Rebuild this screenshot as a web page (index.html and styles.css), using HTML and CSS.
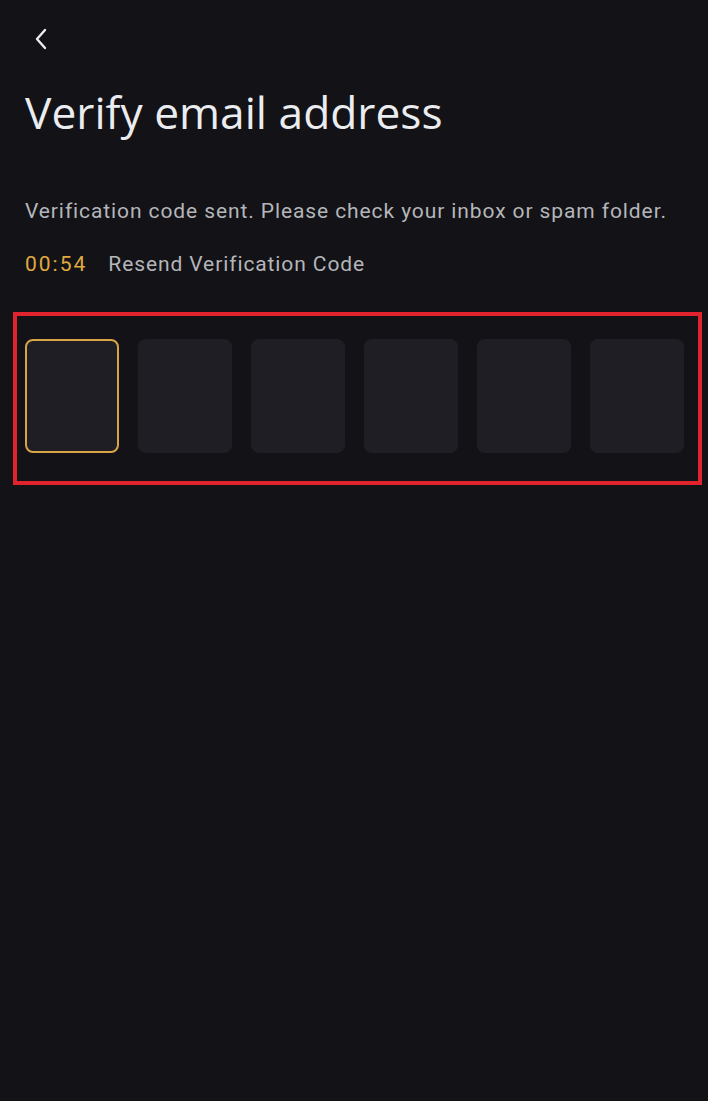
FILE: index.html
```html
<!DOCTYPE html>
<html lang="en">
<head>
    <meta charset="UTF-8">
    <meta name="viewport" content="width=device-width, initial-scale=1.0">
    <title>Verify email address</title>
    <link rel="stylesheet" href="styles.css">
</head>
<body>
    <div class="page">
        <button class="back" aria-label="Back">
            <svg width="14" height="22" viewBox="0 0 14 22">
                <path d="M11 2 L3 11 L11 20" fill="none" stroke="#eaecef" stroke-width="2.4" stroke-linecap="round" stroke-linejoin="round"/>
            </svg>
        </button>
        <h1 class="title">Verify email address</h1>
        <p class="hint">Verification code sent. Please check your inbox or spam folder.</p>
        <div class="resend">
            <span class="timer">00:54</span>
            <span class="resend-link">Resend Verification Code</span>
        </div>
        <div class="code-frame">
            <div class="code-row">
                <div class="cell active"></div>
                <div class="cell"></div>
                <div class="cell"></div>
                <div class="cell"></div>
                <div class="cell"></div>
                <div class="cell"></div>
            </div>
        </div>
    </div>
</body>
</html>
```

FILE: styles.css
```css
body {
    margin: 0;
    background-color: #121217;
    font-family: Roboto, "Liberation Sans", sans-serif;
    height: 100vh;
}
.page {
    padding: 28px 25px 0;
}
.back {
    display: block;
    background: none;
    border: none;
    padding: 0;
    margin-left: 9px;
    width: 14px;
    height: 22px;
    cursor: pointer;
}
.title {
    margin: 34px 0 0;
    font-family: "Open Sans", sans-serif;
    font-weight: 400;
    font-size: 44.3px;
    line-height: 56px;
    color: #eaecef;
}
.hint {
    margin: 58px 0 0;
    font-size: 21px;
    line-height: 26px;
    letter-spacing: 0.9px;
    color: #b4b6ba;
}
.resend {
    margin-top: 27px;
    display: flex;
    gap: 21px;
    font-size: 21px;
    line-height: 26px;
    letter-spacing: 0.9px;
}
.timer {
    color: #e0a93e;
    letter-spacing: 2px;
}
.resend-link {
    color: #b4b6ba;
}
.code-frame {
    margin: 35px 0 0 -12px;
    width: 689px;
    border: 4px solid #e0232d;
    box-sizing: border-box;
    padding: 23px 0 28px 8px;
}
.code-row {
    display: flex;
    gap: 19px;
}
.cell {
    width: 94px;
    height: 114px;
    border-radius: 8px;
    background-color: #1e1e24;
    box-sizing: border-box;
}
.cell.active {
    border: 2px solid #d8a444;
}
```
